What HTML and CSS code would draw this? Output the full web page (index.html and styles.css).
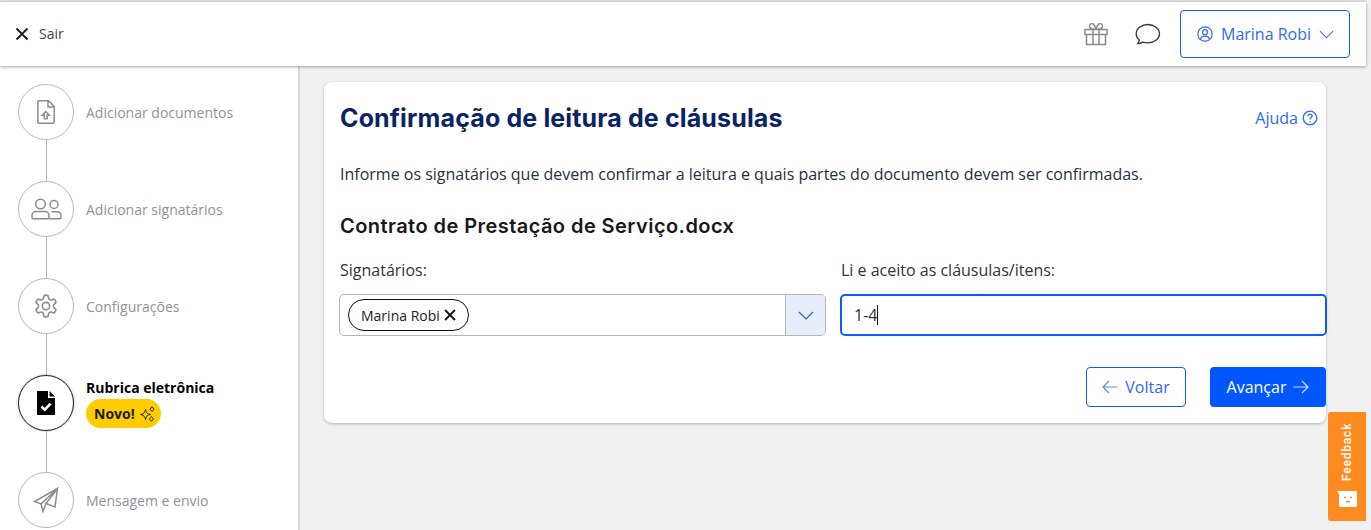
FILE: index.html
```html
<!DOCTYPE html>
<html lang="pt-BR">
<head>
<meta charset="utf-8">
<title>Rubrica eletrônica</title>
<link rel="stylesheet" href="styles.css">
</head>
<body>
<div class="app">
  <header class="topbar">
    <a class="exit">
      <svg class="exit-icon" viewBox="0 0 14 14"><path d="M1.500 1.500l11 11M12.500 1.500l-11 11"/></svg>
      <span class="exit-text">Sair</span>
    </a>
    <div class="top-actions">
      <svg class="gift" viewBox="0 0 26 24"><path d="M2 7.500h22v5H2zM3.500 12.500v10h19v-10M10 7.500v15M16 7.500v15M13 7.500C10 7.500 7 6.500 6.500 4.500 6 2 9 .8 10.500 2.300 12 3.800 13 7.500 13 7.500zM13 7.500c3 0 6-1 6.500-3 .5-2.500-2.500-3.700-4-2.200C14 3.800 13 7.500 13 7.500z"/></svg>
      <svg class="chat" viewBox="0 0 26 22"><path d="M2.800 20.600c1.900-.1 3.500-.7 4.700-1.500 1.500.5 3.400.8 5.300.8 6.400 0 11.700-3.900 11.700-9.100S19.200 1.500 12.900 1.500 1.200 5.400 1.200 10.800c0 2.500 1.100 4.700 3 6.300-.2 1.300-.7 2.500-1.400 3.500z"/></svg>
      <button class="user-btn">
        <svg class="user-icon" viewBox="0 0 16 16"><circle cx="8" cy="8" r="7.200"/><circle cx="8" cy="6.200" r="2.500"/><path d="M3.500 13c.8-2 2.500-2.800 4.500-2.800s3.700.8 4.500 2.800"/></svg>
        <span>Marina Robi</span>
        <svg class="user-chev" viewBox="0 0 16 9"><path d="M1 1l7 7 7-7"/></svg>
      </button>
    </div>
  </header>
  <div class="body">
    <aside class="sidebar">
      <div class="step">
        <div class="disc">
          <svg class="ico" width="18" height="24" viewBox="0 0 18 24"><path d="M1.800 .8h9.700l5.700 5.700v15.700a1 1 0 0 1-1 1H1.800a1 1 0 0 1-1-1V1.800a1 1 0 0 1 1-1zM11 .8v6.200h6.200"/><path d="M8.700 11.500l3.600 3.800h-2.200v3.500H7.300v-3.500H5.100z"/></svg>
        </div>
        <span class="step-label">Adicionar documentos</span>
      </div>
      <div class="step">
        <div class="disc">
          <svg class="ico" width="31" height="22" viewBox="0 0 31 22"><circle cx="9.500" cy="6" r="4.800"/><path d="M2 20.800a1 1 0 0 1-1-1v-2.300c0-2.500 2-4 4-4h9c2 0 4 1.500 4 4v2.300a1 1 0 0 1-1 1z"/><circle cx="23" cy="6.500" r="4"/><path d="M20.500 13.800h5.500c2.500 0 4 1.500 4 4v2a1 1 0 0 1-1 1h-10.500"/></svg>
        </div>
        <span class="step-label">Adicionar signatários</span>
      </div>
      <div class="step">
        <div class="disc">
          <svg class="ico" width="26" height="26" viewBox="0 0 24 24"><path d="M12.220 2h-.44a2 2 0 0 0-2 2v.18a2 2 0 0 1-1 1.730l-.43.25a2 2 0 0 1-2 0l-.15-.08a2 2 0 0 0-2.730.73l-.22.38a2 2 0 0 0 .73 2.730l.15.1a2 2 0 0 1 1 1.720v.51a2 2 0 0 1-1 1.740l-.15.09a2 2 0 0 0-.73 2.730l.22.38a2 2 0 0 0 2.730.73l.15-.08a2 2 0 0 1 2 0l.43.25a2 2 0 0 1 1 1.730V20a2 2 0 0 0 2 2h.44a2 2 0 0 0 2-2v-.18a2 2 0 0 1 1-1.730l.43-.25a2 2 0 0 1 2 0l.15.08a2 2 0 0 0 2.730-.73l.22-.39a2 2 0 0 0-.73-2.730l-.15-.08a2 2 0 0 1-1-1.740v-.5a2 2 0 0 1 1-1.740l.15-.09a2 2 0 0 0 .73-2.730l-.22-.38a2 2 0 0 0-2.730-.73l-.15.08a2 2 0 0 1-2 0l-.43-.25a2 2 0 0 1-1-1.730V4a2 2 0 0 0-2-2z"/><circle cx="12" cy="12" r="3.400"/></svg>
        </div>
        <span class="step-label">Configurações</span>
      </div>
      <div class="step step-active">
        <div class="disc">
          <svg width="18" height="24" viewBox="0 0 18 24"><path class="black" d="M0 0h11v7h7v17H0z"/><path class="black" d="M12.500 0L18 5.500h-5.500z"/><path class="tick" d="M4.500 15.500l3.300 3.200 5.800-6"/></svg>
        </div>
        <div class="active-text">
          <span class="active-label">Rubrica eletrônica</span>
          <span class="badge">Novo!
            <svg width="15" height="16" viewBox="0 0 15 16"><path d="M5.500 3.500c.6 3.300 1.700 4.400 5 5-3.300.6-4.400 1.700-5 5-.6-3.300-1.700-4.400-5-5 3.300-.6 4.400-1.700 5-5zM12 .8l2 2.400-2 2.400-2-2.400zM11.500 10.500l2 2.400-2 2.400-2-2.400z"/></svg>
          </span>
        </div>
      </div>
      <div class="step">
        <div class="disc">
          <svg class="ico" width="26" height="26" viewBox="0 0 26 26"><path d="M24.500 1.500L1.500 14.500l6.500 2.500zM24.500 1.500L22 20l-9-3.500zM24.500 1.500L8 17l2 7.500 3-8"/></svg>
        </div>
        <span class="step-label">Mensagem e envio</span>
      </div>
    </aside>
    <main class="content">
      <section class="card">
        <div class="card-head">
          <h1>Confirmação de leitura de cláusulas</h1>
          <a class="help">Ajuda
            <svg viewBox="0 0 16 16"><circle cx="8" cy="8" r="6.800"/><path d="M5.900 6.300c0-1.300 1-2.100 2.100-2.100s2.100.8 2.100 1.900c0 1.600-2.100 1.700-2.100 3.300"/><path d="M8 11v1.200"/></svg>
          </a>
        </div>
        <p class="intro">Informe os signatários que devem confirmar a leitura e quais partes do documento devem ser confirmadas.</p>
        <h2>Contrato de Prestação de Serviço.docx</h2>
        <div class="fields">
          <div class="field">
            <label>Signatários:</label>
            <div class="select">
              <div class="select-value">
                <span class="chip">Marina Robi
                  <svg viewBox="0 0 12 12"><path d="M1 1l10 10M11 1L1 11"/></svg>
                </span>
              </div>
              <div class="select-arrow">
                <svg viewBox="0 0 16 9"><path d="M1 1l7 7 7-7"/></svg>
              </div>
            </div>
          </div>
          <div class="field">
            <label>Li e aceito as cláusulas/itens:</label>
            <div class="input"><span>1-4</span><i class="caret"></i></div>
          </div>
        </div>
        <div class="actions">
          <button class="btn btn-back">
            <svg viewBox="0 0 16 14"><path d="M7 1L1 7l6 6M1 7h14.500"/></svg>
            Voltar
          </button>
          <button class="btn btn-next">
            Avançar
            <svg viewBox="0 0 16 14"><path d="M9 1l6 6-6 6M15 7H.5"/></svg>
          </button>
        </div>
      </section>
    </main>
  </div>
  <aside class="feedback">
    <span class="feedback-text">Feedback</span>
    <svg class="feedback-icon" viewBox="0 0 20 16"><path d="M0 0h19a1 1 0 0 1 1 1v14a1 1 0 0 1-1 1H3a1 1 0 0 1-1-1V3z"/><circle class="eye" cx="8" cy="6.500" r="1"/><circle class="eye" cx="14" cy="6.500" r="1"/><path class="eye" d="M8.500 10h5c-.5 2-4.500 2-5 0z"/></svg>
  </aside>
</div>
</body>
</html>
```
FILE: styles.css
```css
* { box-sizing: border-box; }
html, body { margin: 0; height: 530px; overflow: hidden; background: #f1f1f1; }
body { font-family: "Open Sans", "Liberation Sans", sans-serif; color: #1f2430; }
.app { position: relative; width: 1366px; height: 530px; background: #f1f1f1; border-top: 2px solid #dedede; display: flex; flex-direction: column; }
.topbar { height: 64px; flex: none; background: #fff; display: flex; align-items: center; justify-content: space-between; padding: 0 16px 0 15px; box-shadow: 0 1px 3px rgba(0,0,0,.35); position: relative; z-index: 2; }
.exit { display: flex; align-items: center; gap: 10px; font-size: 14px; color: #444; }
.exit-text { margin-bottom: 2px; }
.exit-icon { width: 14px; height: 14px; fill: none; stroke: #1a1a1a; stroke-width: 1.800; }
.top-actions { display: flex; align-items: center; }
.gift { width: 26px; height: 24px; fill: none; stroke: #8a8a8e; stroke-width: 1.500; margin-right: 26px; }
.chat { width: 26px; height: 22px; fill: none; stroke: #343a40; stroke-width: 1.300; margin-right: 19px; }
.user-btn { width: 170px; height: 48px; border: 1px solid #0b5cff; border-radius: 4px; background: #fff; color: #2e6bf0; font: 16px "Open Sans", sans-serif; display: flex; align-items: center; padding: 0 15px 0 16px; gap: 8px; white-space: nowrap; }
.user-icon { width: 16px; height: 16px; flex: none; fill: none; stroke: #2e6bf0; stroke-width: 1.200; }
.user-chev { width: 15px; height: 9px; flex: none; fill: none; stroke: #2e6bf0; stroke-width: 1.100; }
.body { flex: 1; display: flex; min-height: 0; }
.sidebar { width: 300px; flex: none; background: #fff; border-right: 2px solid #d9d9d9; padding: 18px 0 0 18px; display: flex; flex-direction: column; gap: 41px; position: relative; }
.step { display: flex; align-items: center; gap: 12px; height: 56px; flex: none; position: relative; }
.step:not(:last-child)::after { content: ""; position: absolute; left: 28px; top: 56px; width: 1px; height: 41px; background: #b4b6bc; }
.disc { width: 56px; height: 56px; flex: none; border: 1px solid #b4b6bc; border-radius: 50%; background: #fff; display: flex; align-items: center; justify-content: center; }
.ico { fill: none; stroke: #8c8c91; stroke-width: 1.500; }
.step-label { font-size: 14px; color: #8f929c; }
.step-active .disc { border-color: #1d2735; box-shadow: 0 0 2px rgba(29,39,53,.5); }
.black { fill: #000; }
.tick { fill: none; stroke: #fff; stroke-width: 2.600; }
.active-text { display: flex; flex-direction: column; align-items: flex-start; gap: 1px; }
.active-label { font-size: 14px; font-weight: 700; color: #000; line-height: 20px; }
.badge { height: 29px; padding: 0 6px 0 8px; border-radius: 15px; background: #ffcc00; font-size: 14px; font-weight: 700; color: #1a1a1a; display: flex; align-items: center; gap: 5px; }
.badge svg { fill: none; stroke: #1a1a1a; stroke-width: .9; }
.content { flex: 1; padding: 16px 40px 0 24px; min-width: 0; }
.card { height: 341px; background: #fff; border-radius: 8px; box-shadow: 0 1px 3px rgba(0,0,0,.25); padding: 18px 16px 0 16px; }
.card-head { display: flex; justify-content: space-between; align-items: center; height: 35px; }
h1 { margin: 0; font-family: Inter, "Open Sans", sans-serif; font-size: 25px; font-weight: 700; letter-spacing: .14px; color: #0a2463; white-space: nowrap; }
.help { display: flex; align-items: center; gap: 4px; font-size: 16px; color: #2e6bf0; margin-right: -8px; }
.help svg { width: 16px; height: 16px; fill: none; stroke: #2e6bf0; stroke-width: 1.300; }
.intro { margin: 28px 0 0; font-size: 16px; line-height: 22px; color: #25303f; white-space: nowrap; }
h2 { margin: 28px 0 0; font-family: Inter, "Open Sans", sans-serif; font-size: 20px; font-weight: 600; letter-spacing: .44px; line-height: 26px; color: #16181d; white-space: nowrap; }
.fields { display: grid; grid-template-columns: 487px 487px; gap: 14px; margin: 20px -16px 0 -1px; }
.field { display: flex; flex-direction: column; }
.field label { font-size: 16px; line-height: 22px; color: #333; margin-bottom: 13px; padding-left: 1px; }
.select { height: 42px; display: flex; border: 1px solid #b5b5b5; border-radius: 5px; overflow: hidden; }
.select-value { flex: 1; display: flex; align-items: center; padding-left: 8px; }
.chip { display: flex; align-items: center; gap: 4px; height: 32px; border: 1px solid #111; border-radius: 16px; padding: 0 12px 0 12px; font-size: 14px; color: #222; }
.chip svg { width: 12px; height: 12px; fill: none; stroke: #111; stroke-width: 1.800; }
.select-arrow { width: 40px; border-left: 1px solid #b5b5b5; background: #e6eefc; display: flex; align-items: center; justify-content: center; }
.select-arrow svg { width: 16px; height: 9px; fill: none; stroke: #2e62d8; stroke-width: 1.200; }
.input { height: 42px; border: 2px solid #0b5cff; border-radius: 5px; display: flex; align-items: center; padding-left: 12px; font-size: 16px; color: #333; }
.caret { width: 1px; height: 20px; background: #111; }
.actions { display: flex; justify-content: flex-end; gap: 24px; margin-top: 31px; margin-right: -16px; }
.btn { height: 40px; border-radius: 4px; font: 16px "Open Sans", sans-serif; display: flex; align-items: center; justify-content: center; gap: 7px; }
.btn svg { width: 16px; height: 14px; fill: none; stroke-width: 1.200; }
.btn-back { width: 100px; background: #fff; border: 1px solid #0b5cff; color: #2e6bf0; }
.btn-back svg { stroke: #5a8cf5; }
.btn-next { width: 116px; background: #0057ff; border: 0; color: #fff; }
.btn-next svg { stroke: #cfe0ff; }
.feedback { position: absolute; right: 0; top: 410px; width: 38px; height: 109px; background: #ff8a1f; border-radius: 3px 0 0 3px; display: flex; flex-direction: column; align-items: center; padding-top: 11px; }
.feedback-text { writing-mode: vertical-rl; transform: rotate(180deg); font-family: Roboto, "Liberation Sans", sans-serif; font-size: 12px; font-weight: 500; letter-spacing: .8px; color: #fff; height: 58px; text-align: left; }
.feedback-icon { width: 20px; height: 16px; margin-top: 10px; fill: #fff; }
.feedback-icon .eye { fill: #ff8a1f; }
```
